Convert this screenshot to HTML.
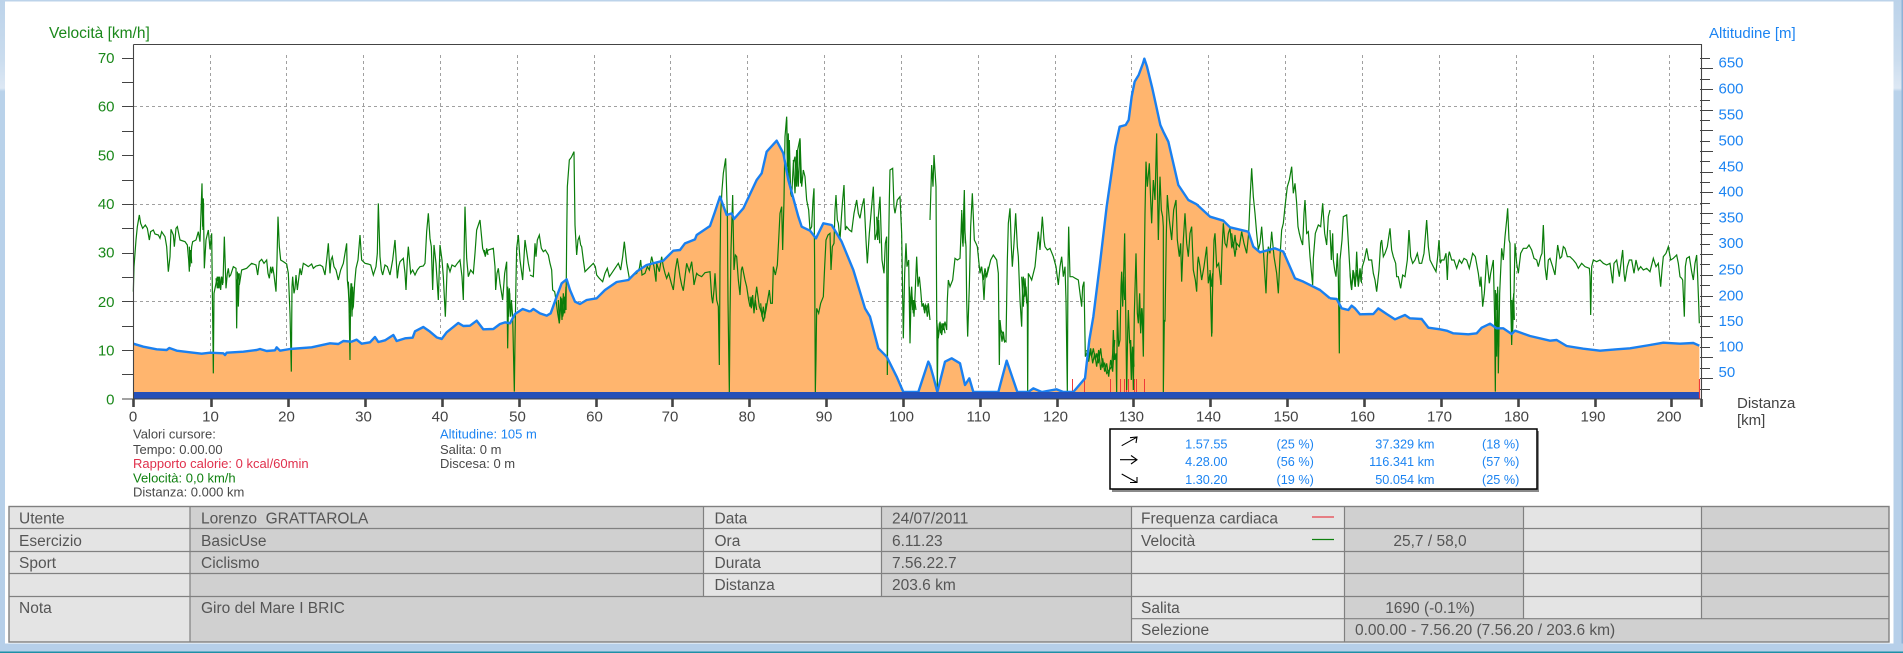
<!DOCTYPE html>
<html><head><meta charset="utf-8"><title>Velocità / Altitudine</title>
<style>
html,body{margin:0;padding:0;background:#fff;width:1903px;height:653px;overflow:hidden}
svg{display:block;position:absolute;left:0;top:0}
text{font-family:"Liberation Sans",Arial,sans-serif}
path{vector-effect:non-scaling-stroke}
.gr{fill:none;stroke:#0b7d0b;stroke-width:1.2;stroke-linejoin:miter}
.bl{fill:none;stroke:#1a80f0;stroke-width:2.4;stroke-linejoin:round}
.or{fill:#ffb56e;stroke:none}
.gv{fill:#1a881a;font-size:15px}
.tt{font-size:15.5px}
.bv{fill:#1c84f2;font-size:15px}
.ax{fill:#444;font-size:15px;text-anchor:middle}
.cur{font-size:13px;fill:#484848}
.tb{font-size:15.5px;fill:#555}
.bx{font-size:12.7px;fill:#1c84f2}
</style></head><body>
<svg width="1903" height="653" viewBox="0 0 1903 653" xmlns="http://www.w3.org/2000/svg">
<defs><linearGradient id="fr" x1="0" y1="0" x2="0" y2="1">
<stop offset="0" stop-color="#bcd3ea"/><stop offset=".09" stop-color="#cadcee"/><stop offset=".135" stop-color="#dde8f4"/><stop offset=".14" stop-color="#b9d2ea"/><stop offset="1" stop-color="#b6cfe9"/></linearGradient></defs>
<rect width="1903" height="653" fill="#fff"/>
<rect x="0" y="0" width="1903" height="1.5" fill="#bcd3ea"/>
<rect x="0" y="0" width="5" height="653" fill="url(#fr)"/>
<rect x="1893.5" y="0" width="9.5" height="653" fill="url(#fr)"/>
<rect x="1901.5" y="0" width="1.5" height="653" fill="#8fb2d6"/>
<rect x="0" y="643.5" width="1903" height="9.5" fill="#b6cfe9"/>
<rect x="0" y="651.5" width="1903" height="1.5" fill="#1f8fa6"/>

<!-- grid -->
<g stroke="#a0a0a0" stroke-width="1" stroke-dasharray="3 3" fill="none">
<path d="M134 106.5H1701M134 204.5H1701M134 301.5H1701"/>
<path d="M210.5 55V392M286.5 55V392M363.5 55V392M440.5 55V392M517.5 55V392M594.5 55V392M670.5 55V392M747.5 55V392M824.5 55V392M901.5 55V392M978.5 55V392M1055.5 55V392M1131.5 55V392M1208.5 55V392M1285.5 55V392M1362.5 55V392M1439.5 55V392M1516.5 55V392M1593.5 55V392M1669.5 55V392"/>
</g>

<!-- fills -->
<g transform="translate(130,160) scale(.33333)"><path class="or" d="M10,551 40,560 80,568 110,570 118,564 140,572 180,577 215,581 240,578 280,580 285,585 290,578 340,575 380,570 390,567 410,573 435,571 440,562 450,572 480,567 545,562 600,550 625,552 640,543 665,545 680,539 695,551 720,547 735,531 745,546 765,541 790,525 800,543 825,535 848,533 855,514 880,501 900,515 920,532 935,537 950,517 985,489 1000,498 1020,497 1040,482 1060,508 1090,507 1110,492 1125,487 1140,490 1155,462 1178,447 1200,455V696H10Z"/></g>
<g transform="translate(530,100) scale(.33333)"><path class="or" d="M0,635 10,627 30,640 50,647 62,640 80,590 95,550 110,538 120,570 135,605 150,612 170,600 200,595 225,570 260,546 295,540 320,515 350,495 400,482 430,452 450,450 465,430 495,418 500,405 540,378 555,335 570,290 590,345 605,340 612,357 640,325 680,240 695,220 710,155 740,122 760,160 775,240 805,350 815,380 840,392 858,415 880,370 905,375 935,425 970,510 1005,625 1020,650 1045,745 1070,770 1100,830 1120,876 1165,876 1195,785 1200,795V876H0Z"/></g>
<g transform="translate(930,100) scale(.33333)"><path class="or" d="M0,795 10,830 22,876 45,785 65,775 90,790 105,855 118,835 130,876 205,876 230,782 262,876 295,876 310,865 335,876 380,868 400,876 430,876 465,835 478,720 490,650 510,490 530,320 556,140 569,80 587,75 596,60 605,-10 614,-55 626,-75 639,-110 643,-124 651,-100 667,-35 679,20 691,75 700,95 715,125 745,255 775,300 800,313 840,350 880,362 900,382 955,395 970,440 990,457 1035,445 1060,455 1095,535 1120,545 1170,570 1200,595V876H0Z"/></g>
<g transform="translate(1330,160) scale(.33333)"><path class="or" d="M0,415 20,417 35,445 55,450 65,437 75,445 90,463 130,462 145,445 170,462 195,478 225,465 240,475 275,477 295,503 330,508 350,512 370,520 415,523 440,520 455,503 480,491 500,505 520,505 545,522 555,512 600,528 660,542 680,540 710,558 760,566 810,572 860,568 900,565 960,555 1000,548 1050,551 1090,549 1108,557V696H0Z"/></g>

<!-- red ticks -->
<path d="M1072.5 379V392M1084.5 379V392M1110.5 379V392M1120.5 379V392M1124.5 379V392M1126.5 379V392M1128.5 379V392M1134.5 379V392M1136.5 379V392M1144.5 379V392" stroke="#ee3a3a" stroke-width="1" fill="none"/>

<!-- green -->
<g transform="translate(130,160) scale(.33333)"><path class="gr" d="M10,395 12,320 18,240 22,200 28,165 32,190 38,205 46,195 52,205 58,240 62,215 70,210 75,222 85,225 90,235 95,215 105,230 110,260 115,335 120,290 123,208 130,225 133,260 138,205 142,200 150,240 165,245 172,255 176,300 178,335 180,270 182,300 185,260 188,245 198,240 205,215 210,245 216,70 218,200 220,115 223,325 228,240 235,210 240,268 245,220 250,640 252,400 258,370 262,350 266,385 268,350 272,390 275,350 279,370 283,230 288,385 292,340 295,325 298,350 302,345 310,320 318,325 320,505 322,360 325,340 328,375 335,330 350,325 365,310 378,315 383,345 388,305 395,298 402,310 410,300 414,340 418,355 422,320 425,340 428,320 432,345 438,395 441,300 444,170 448,260 452,300 460,305 470,312 475,340 480,460 484,635 486,380 488,350 492,400 495,385 498,345 502,390 510,325 514,345 520,310 528,315 535,320 545,312 550,325 558,318 570,315 578,320 585,345 590,300 595,250 600,340 603,300 607,290 612,320 618,330 625,360 632,330 640,310 650,250 652,360 655,390 657,430 660,600 662,390 665,370 667,450 670,440 674,370 678,325 684,300 690,225 695,300 705,310 714,312 722,315 730,345 738,320 742,280 745,130 750,290 754,330 758,345 765,315 772,320 780,345 788,300 795,240 802,355 806,320 810,305 820,295 825,340 828,390 832,300 835,260 842,340 848,330 855,345 862,330 870,320 880,318 885,310 890,215 895,160 900,235 904,260 908,390 912,255 918,310 925,420 930,255 936,300 940,350 946,470 952,310 960,335 966,315 975,320 982,310 990,300 996,350 1000,420 1003,240 1005,140 1010,295 1015,350 1022,330 1030,340 1035,280 1040,210 1050,180 1058,265 1065,285 1075,270 1090,265 1095,320 1097,390 1101,340 1105,325 1110,370 1118,420 1124,340 1130,305 1133,565 1136,400 1138,385 1141,440 1145,430 1148,470 1153,695 1155,540 1158,360 1160,265 1165,225 1170,300 1178,360 1185,240 1195,310 1200,335"/>
<path class="gr" d="M655,365 660,460 663,370 666,470 668,380 670,430M1133,380 1136,470 1139,400 1142,470 1145,420M178,260 180,320 183,270 185,310M216,110 219,210 221,130M258,355 262,385 266,350 270,385 274,350 278,375M322,335 325,440 328,340M1063,270 1066,290 1070,265 1074,285"/></g>
<g transform="translate(530,100) scale(.33333)"><path class="gr" d="M0,525 10,530 15,430 18,470 22,420 28,405 34,445 40,455 46,450 55,465 60,490 65,510 68,570 74,575 78,600 83,640 88,670 92,620 95,595 98,650 100,640 104,590 108,630 110,420 112,260 118,180 124,172 132,155 135,375 140,465 144,420 148,410 152,435 155,440 160,480 165,515 175,505 190,490 196,500 200,525 208,535 218,545 225,520 232,505 238,530 245,520 255,505 265,490 272,510 278,470 283,425 290,490 298,535 310,525 320,520 328,505 332,480 336,525 345,520 352,500 358,510 365,470 372,500 378,545 380,490 388,515 395,470 400,500 405,520 410,535 416,520 424,550 430,570 436,510 442,475 450,530 455,555 460,572 465,530 470,490 478,515 485,485 490,530 492,555 500,520 505,525 515,530 525,518 540,515 545,590 548,610 552,570 555,520 560,600 565,620 568,795 570,500 572,340 576,270 580,220 587,175 592,340 594,600 596,745 598,876 600,650 603,450 608,285 612,510 616,465 620,470 625,540 630,585 634,510 637,500 645,540 650,560 656,600 660,620 666,590 672,630 680,560 688,620 695,640 700,665 708,630 713,600 718,570 722,610 727,610 730,500 736,525 742,495 746,420 750,340 755,320 758,450 762,300 765,110 770,50 774,220 778,120 782,280 785,290 790,190 795,170 800,260 803,150 810,115 815,260 820,210 825,230 830,300 836,330 840,390 845,380 849,300 852,265 854,500 856,876 858,775 860,625 866,640 872,610 880,590 884,500 888,420 894,405 900,400 903,510 907,440 912,430 915,330 918,285 922,360 925,370 930,420 935,340 938,300 942,255 946,390 950,380 958,390 965,395 972,340 980,300 985,340 990,355 996,320 1002,295 1008,420 1012,490 1018,400 1024,330 1030,260 1035,420 1040,400 1045,350 1050,290 1056,480 1062,520 1066,430 1070,410 1072,825 1075,490 1078,300 1080,210 1088,205 1092,320 1095,340 1102,300 1110,290 1115,400 1120,715 1124,520 1128,430 1131,500 1136,480 1140,730 1143,600 1145,560 1148,630 1150,600 1152,650 1155,590 1160,470 1164,560 1168,530 1172,570 1176,620 1180,610 1182,630 1186,615 1190,630 1195,610 1200,660"/>
<path class="gr" d="M1138,560 1142,630 1146,590 1150,640 1154,600 1158,630M1180,610 1184,640 1188,615 1192,650 1196,620M85,600 88,670 92,590 96,660 100,580 104,640 108,560 105,630M770,60 772,200 775,100 777,250M790,180 795,280 800,150 805,260 810,120 812,250M1040,350 1043,420 1046,360 1049,430M660,590 664,625 668,585 672,640 676,600 680,630M692,610 696,650 700,620 704,655 708,610"/></g>
<g transform="translate(930,100) scale(.33333)"><path class="gr" d="M0,360 5,195 9,260 12,165 18,260 20,625 22,876 24,690 25,710 28,670 32,700 36,670 40,690 45,665 50,690 52,600 55,540 60,560 68,540 75,475 82,480 90,475 93,400 95,340 98,430 103,270 105,400 108,440 110,600 113,710 116,620 118,560 122,380 127,280 133,420 138,430 142,440 146,480 150,520 154,500 158,530 162,600 166,520 170,530 175,510 182,480 190,465 200,480 205,520 208,795 210,660 213,690 218,700 222,720 228,725 232,480 235,370 240,325 244,440 247,500 252,430 257,340 262,440 265,470 270,600 275,680 278,550 280,530 284,590 288,560 292,620 293,876 295,520 300,530 305,540 315,500 325,395 330,450 337,350 342,420 345,440 352,450 360,445 370,470 378,500 385,555 390,500 395,470 400,530 405,500 408,600 412,876 414,500 416,380 420,530 428,530 436,535 445,540 450,580 455,620 458,560 462,545 466,770 470,760 475,770 480,755 485,770 490,745 496,780 500,760 505,790 512,745 518,800 524,790 530,820 538,810 545,800 548,760 550,690 554,780 558,760 560,876 562,630 566,740 570,720 573,560 575,515 578,620 581,520 584,400 587,620 590,870 593,700 595,630 599,730 602,720 605,800 608,750 610,870 613,640 618,460 622,640 625,670 629,580 632,700 635,625 638,690 640,770 643,500 645,340 648,185 652,260 658,190 662,300 665,370 670,240 675,300 680,100 683,300 685,420 688,300 690,230 694,330 698,350 700,380 700,876 703,660 705,665 709,400 712,285 718,360 725,420 731,330 738,300 742,420 748,470 752,430 755,545 760,420 765,340 770,430 775,470 780,400 785,380 790,510 796,540 800,575 803,490 805,470 810,500 815,540 822,500 830,440 835,550 840,520 845,710 848,560 852,420 855,400 860,500 866,490 873,555 876,450 880,370 885,430 890,440 895,400 900,385 905,440 910,430 915,470 920,430 928,440 935,395 942,430 950,460 956,400 960,300 965,205 970,290 975,340 980,400 985,450 990,430 995,380 1000,450 1008,580 1012,470 1015,440 1020,460 1025,395 1032,470 1040,520 1045,580 1050,470 1055,390 1060,370 1065,320 1072,260 1078,240 1085,200 1090,280 1095,250 1100,310 1104,380 1108,400 1113,420 1118,435 1122,340 1125,300 1130,400 1135,395 1140,470 1148,555 1150,475 1156,400 1165,375 1172,380 1178,310 1184,400 1190,435 1195,350 1200,330"/>
<path class="gr" d="M470,750 476,785 482,745 488,790 494,760 500,800 506,750 512,810 518,775 524,815 530,790 536,830 542,780 548,815 554,720M575,520 578,610 581,530 584,600M600,720 604,840 608,740 612,800M628,620 632,690 636,625 640,680M20,660 25,715 30,665 35,705 40,670 45,700M155,500 160,540 165,505 170,530 175,500M212,690 216,725 220,695 224,728M275,530 280,620 285,535 290,610M840,510 844,560 848,520 846,700M905,400 910,445 915,405 920,450M95,330 99,440 103,340 106,430"/></g>
<g transform="translate(1330,160) scale(.33333)"><path class="gr" d="M0,210 4,300 8,220 10,300 14,330 18,350 22,280 25,350 28,580 30,300 36,240 40,170 50,165 54,230 58,300 62,370 65,390 69,330 72,340 76,380 80,275 85,380 90,330 93,365 97,320 103,300 110,265 116,300 125,300 130,340 135,360 140,395 147,330 152,250 155,240 160,290 165,280 172,260 180,205 185,270 190,290 197,310 200,350 205,350 212,385 218,345 225,350 232,300 237,210 242,290 248,310 255,300 262,280 268,310 275,310 282,280 290,180 295,260 300,300 310,320 318,335 323,290 327,240 331,310 335,300 342,300 348,280 352,360 355,290 358,275 365,300 372,300 380,325 388,300 395,310 402,295 410,300 418,325 428,280 436,290 445,340 450,380 453,350 458,440 463,400 467,340 470,285 474,330 478,370 482,340 490,300 494,480 496,695 498,400 500,450 503,380 505,640 509,400 515,265 520,300 525,230 530,180 533,145 537,240 540,250 542,430 545,555 548,430 552,400 555,250 560,310 565,340 572,280 580,265 590,265 597,255 605,270 612,295 620,300 625,320 632,290 636,280 640,195 645,320 650,360 655,300 660,295 668,320 675,345 680,290 683,255 690,295 695,290 700,260 705,265 712,290 720,290 730,300 738,310 745,325 755,310 765,320 778,325 780,350 782,465 785,320 790,300 800,305 810,300 820,310 830,315 840,310 848,370 852,310 860,300 868,350 874,300 878,270 882,340 885,365 892,320 898,300 905,300 912,340 918,300 925,330 932,320 940,330 950,325 960,335 970,295 978,320 985,310 992,380 996,330 1000,290 1008,280 1015,260 1022,300 1030,295 1040,285 1045,310 1050,350 1055,355 1058,360 1063,470 1066,320 1070,295 1078,290 1085,335 1090,360 1095,310 1100,285 1103,350 1106,430 1108,490"/>
<path class="gr" d="M496,390 500,590 503,390 506,560M545,420 548,520 551,400 553,480M60,340 65,385 70,335 75,380 80,330 85,375 90,325 95,370"/></g>

<!-- blue outline -->
<g transform="translate(130,160) scale(.33333)"><path class="bl" d="M10,551 40,560 80,568 110,570 118,564 140,572 180,577 215,581 240,578 280,580 285,585 290,578 340,575 380,570 390,567 410,573 435,571 440,562 450,572 480,567 545,562 600,550 625,552 640,543 665,545 680,539 695,551 720,547 735,531 745,546 765,541 790,525 800,543 825,535 848,533 855,514 880,501 900,515 920,532 935,537 950,517 985,489 1000,498 1020,497 1040,482 1060,508 1090,507 1110,492 1125,487 1140,490 1155,462 1178,447 1200,455"/></g>
<g transform="translate(530,100) scale(.33333)"><path class="bl" d="M0,635 10,627 30,640 50,647 62,640 80,590 95,550 110,538 120,570 135,605 150,612 170,600 200,595 225,570 260,546 295,540 320,515 350,495 400,482 430,452 450,450 465,430 495,418 500,405 540,378 555,335 570,290 590,345 605,340 612,357 640,325 680,240 695,220 710,155 740,122 760,160 775,240 805,350 815,380 840,392 858,415 880,370 905,375 935,425 970,510 1005,625 1020,650 1045,745 1070,770 1100,830 1120,876 1165,876 1195,785 1200,795"/></g>
<g transform="translate(930,100) scale(.33333)"><path class="bl" d="M0,795 10,830 22,876 45,785 65,775 90,790 105,855 118,835 130,876 205,876 230,782 262,876 295,876 310,865 335,876 380,868 400,876 430,876 465,835 478,720 490,650 510,490 530,320 556,140 569,80 587,75 596,60 605,-10 614,-55 626,-75 639,-110 643,-124 651,-100 667,-35 679,20 691,75 700,95 715,125 745,255 775,300 800,313 840,350 880,362 900,382 955,395 970,440 990,457 1035,445 1060,455 1095,535 1120,545 1170,570 1200,595"/></g>
<g transform="translate(1330,160) scale(.33333)"><path class="bl" d="M0,415 20,417 35,445 55,450 65,437 75,445 90,463 130,462 145,445 170,462 195,478 225,465 240,475 275,477 295,503 330,508 350,512 370,520 415,523 440,520 455,503 480,491 500,505 520,505 545,522 555,512 600,528 660,542 680,540 710,558 760,566 810,572 860,568 900,565 960,555 1000,548 1050,551 1090,549 1108,557"/></g>

<!-- band + frame -->
<rect x="133.5" y="392" width="1566" height="7" fill="#2550b8"/>
<path d="M1699.5 379V399" stroke="#ee3a3a" stroke-width="1.2"/>
<path d="M133.5 44.5H1701.5V407M133.5 44.5V399H1701" fill="none" stroke="#444" stroke-width="1.1"/>

<!-- left ticks -->
<path d="M122 58.5H133M122 82.5H133M122 106.5H133M122 131.5H133M122 155.5H133M122 180.5H133M122 204.5H133M122 228.5H133M122 253.5H133M122 277.5H133M122 301.5H133M122 326.5H133M122 350.5H133M122 374.5H133M122 399H133" stroke="#444" stroke-width="1.1" fill="none"/>
<!-- right ticks -->
<path d="M1700 58.5H1710M1700 68.5H1713M1700 79.5H1710M1700 89.5H1713M1700 100.5H1710M1700 110.5H1713M1700 120.5H1710M1700 130.5H1713M1700 141.5H1710M1700 151.5H1713M1700 161.5H1710M1700 172.5H1713M1700 182.5H1710M1700 192.5H1713M1700 203.5H1710M1700 213.5H1713M1700 223.5H1710M1700 234.5H1713M1700 244.5H1710M1700 254.5H1713M1700 264.5H1710M1700 275.5H1713M1700 285.5H1710M1700 296.5H1713M1700 306.5H1710M1700 316.5H1713M1700 326.5H1710M1700 337.5H1713M1700 347.5H1710M1700 357.5H1713M1700 368.5H1710M1700 378.5H1713M1700 389.5H1710" stroke="#444" stroke-width="1.1" fill="none"/>
<!-- x ticks -->
<path d="M133.5 399V407M211.5 399V407M288.5 399V407M365.5 399V407M442.5 399V407M519.5 399V407M596.5 399V407M672.5 399V407M749.5 399V407M826.5 399V407M903.5 399V407M980.5 399V407M1057.5 399V407M1133.5 399V407M1210.5 399V407M1287.5 399V407M1364.5 399V407M1441.5 399V407M1518.5 399V407M1595.5 399V407M1671.5 399V407M1701.5 399V407" stroke="#444" stroke-width="2.6" fill="none"/>

<!-- axis titles -->
<text x="49" y="38" class="gv tt">Velocità [km/h]</text>
<text x="1709" y="38" class="bv tt">Altitudine [m]</text>
<text x="1737" y="408" font-size="15" fill="#444">Distanza</text>
<text x="1737" y="425" font-size="15" fill="#444">[km]</text>

<g class="gv" text-anchor="end">
<text x="114.5" y="63">70</text><text x="114.5" y="111.7">60</text><text x="114.5" y="160.4">50</text><text x="114.5" y="209">40</text><text x="114.5" y="257.7">30</text><text x="114.5" y="307">20</text><text x="114.5" y="355.4">10</text><text x="114.5" y="404.4">0</text>
</g>
<g class="bv">
<text x="1718.5" y="67.4">650</text><text x="1718.5" y="93.4">600</text><text x="1718.5" y="119.4">550</text><text x="1718.5" y="145.4">500</text><text x="1718.5" y="171.4">450</text><text x="1718.5" y="196.4">400</text><text x="1718.5" y="222.4">350</text><text x="1718.5" y="248">300</text><text x="1718.5" y="274.4">250</text><text x="1718.5" y="300.7">200</text><text x="1718.5" y="326">150</text><text x="1718.5" y="351.4">100</text><text x="1718.5" y="377">50</text>
</g>
<g>
<text class="ax" x="133" y="421.5">0</text><text class="ax" x="210.5" y="421.5">10</text><text class="ax" x="286.5" y="421.5">20</text><text class="ax" x="363.5" y="421.5">30</text><text class="ax" x="440" y="421.5">40</text><text class="ax" x="517.5" y="421.5">50</text><text class="ax" x="594.5" y="421.5">60</text><text class="ax" x="670" y="421.5">70</text><text class="ax" x="747" y="421.5">80</text><text class="ax" x="824" y="421.5">90</text><text class="ax" x="901.5" y="421.5">100</text><text class="ax" x="978.5" y="421.5">110</text><text class="ax" x="1055.5" y="421.5">120</text><text class="ax" x="1131.5" y="421.5">130</text><text class="ax" x="1208.5" y="421.5">140</text><text class="ax" x="1286" y="421.5">150</text><text class="ax" x="1362.5" y="421.5">160</text><text class="ax" x="1439.5" y="421.5">170</text><text class="ax" x="1516.5" y="421.5">180</text><text class="ax" x="1593" y="421.5">190</text><text class="ax" x="1669" y="421.5">200</text>
</g>

<!-- cursor values -->
<text class="cur" x="133" y="438.7">Valori cursore:</text>
<text class="cur" x="133" y="454">Tempo: 0.00.00</text>
<text class="cur" x="133" y="468" style="fill:#e0304c">Rapporto calorie: 0 kcal/60min</text>
<text class="cur" x="133" y="482.7" style="fill:#0f800f">Velocità: 0,0 km/h</text>
<text class="cur" x="133" y="496.7">Distanza: 0.000 km</text>
<text class="cur" x="440" y="438.7" style="fill:#1c84f2">Altitudine: 105 m</text>
<text class="cur" x="440" y="454">Salita: 0 m</text>
<text class="cur" x="440" y="468">Discesa: 0 m</text>

<!-- stats box -->
<rect x="1112" y="431" width="427" height="61" fill="#8a8a8a"/>
<rect x="1110" y="429" width="427" height="60" fill="#fff" stroke="#000" stroke-width="1.5"/>
<g fill="none" stroke="#000" stroke-width="1.1">
<path d="M1121.7 445.7L1136.7 437.3M1130 437.7L1137 437L1136 443"/>
<path d="M1120 459.7H1137M1131 455.5L1137 459.7L1131 464"/>
<path d="M1121.7 474L1137 482.5M1137 477V482.5H1130"/>
</g>
<g class="bx">
<g text-anchor="end"><text x="1227.5" y="448.3">1.57.55</text><text x="1227.5" y="466">4.28.00</text><text x="1227.5" y="484">1.30.20</text>
<text x="1434.5" y="448.3">37.329 km</text><text x="1434.5" y="466">116.341 km</text><text x="1434.5" y="484">50.054 km</text></g>
<text x="1276.5" y="448.3">(25 %)</text><text x="1276.5" y="466">(56 %)</text><text x="1276.5" y="484">(19 %)</text>
<text x="1482" y="448.3">(18 %)</text><text x="1482" y="466">(57 %)</text><text x="1482" y="484">(25 %)</text>
</g>

<!-- table -->
<rect x="9" y="506" width="1880" height="136" fill="#d0d0d0"/>
<g fill="#e4e4e4">
<rect x="9" y="506" width="181" height="136"/>
<rect x="703" y="506" width="178" height="90"/>
<rect x="1131" y="506" width="213" height="136"/>
<rect x="1523" y="506" width="178" height="113"/>
</g>
<g stroke="#808080" stroke-width="1.2" fill="none">
<rect x="9" y="506.5" width="1880" height="135.5" stroke-width="1.4"/>
<path d="M9 528.5H1889M9 551.5H1889M9 573.5H1889M9 596.5H1889M1131 618.7H1889"/>
<path d="M190 506V642M703.5 506V596M881.5 506V596M1131.5 506V642M1344.5 506V642M1523.5 506V619M1701.5 506V619"/>
</g>
<path d="M1312 517H1334" stroke="#e8404a" stroke-width="1.2"/>
<path d="M1312 539.5H1334" stroke="#0f800f" stroke-width="1.2"/>
<g class="tb">
<text x="19" y="523.3">Utente</text><text x="19" y="546">Esercizio</text><text x="19" y="568">Sport</text><text x="19" y="613">Nota</text>
<text x="201" y="523.3" xml:space="preserve">Lorenzo  GRATTAROLA</text><text x="201" y="546">BasicUse</text><text x="201" y="568">Ciclismo</text><text x="201" y="613">Giro del Mare I BRIC</text>
<text x="714.5" y="523.3">Data</text><text x="714.5" y="546">Ora</text><text x="714.5" y="568">Durata</text><text x="714.5" y="590">Distanza</text>
<text x="892" y="523.3">24/07/2011</text><text x="892" y="546">6.11.23</text><text x="892" y="568">7.56.22.7</text><text x="892" y="590">203.6 km</text>
<text x="1141" y="523.3">Frequenza cardiaca</text><text x="1141" y="546">Velocità</text><text x="1141" y="613">Salita</text><text x="1141" y="635">Selezione</text>
<text x="1430" y="546" text-anchor="middle">25,7 / 58,0</text>
<text x="1430" y="613" text-anchor="middle">1690 (-0.1%)</text>
<text x="1355" y="635">0.00.00 - 7.56.20 (7.56.20 / 203.6 km)</text>
</g>
</svg>
</body></html>
